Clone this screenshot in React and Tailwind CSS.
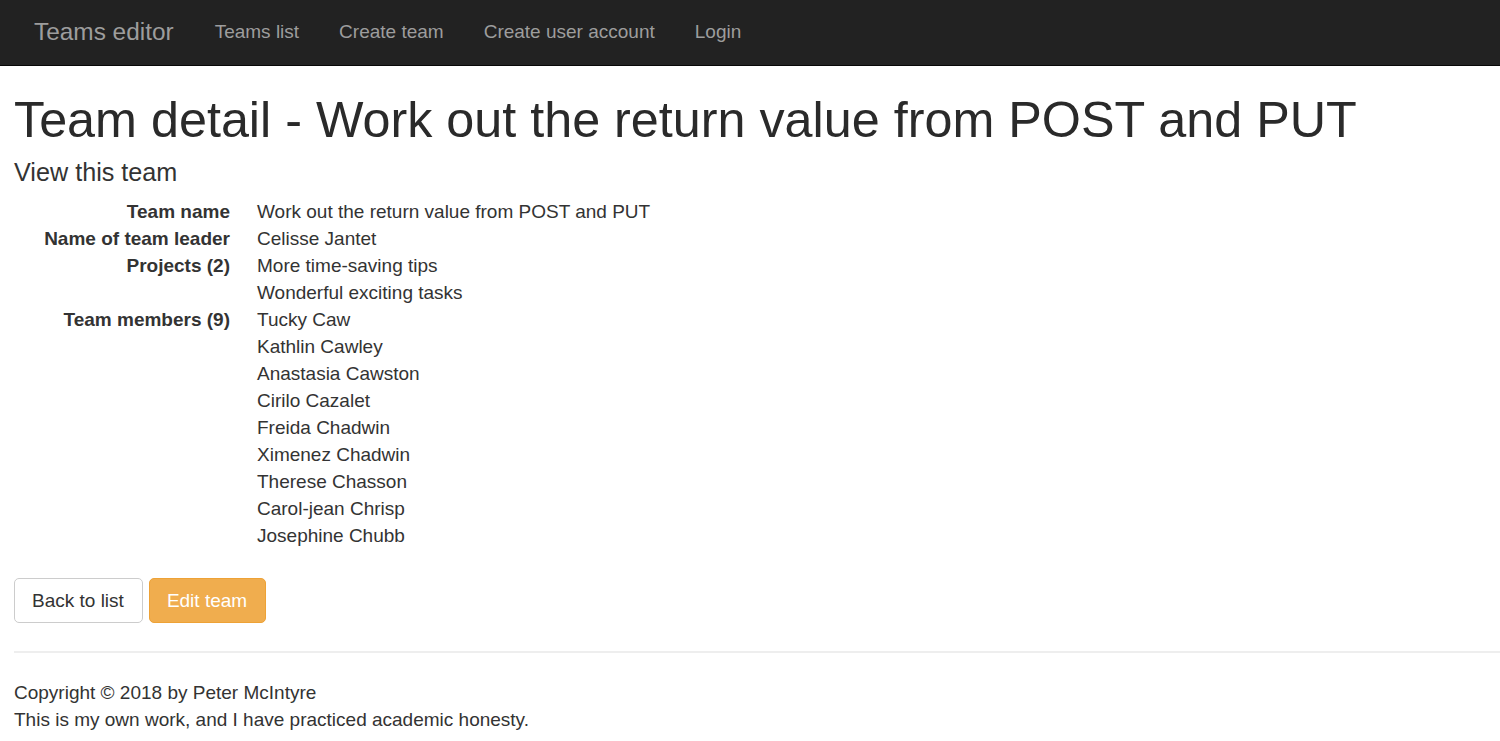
import React from "react";

const rows = [
  ["Team name", ["Work out the return value from POST and PUT"]],
  ["Name of team leader", ["Celisse Jantet"]],
  ["Projects (2)", ["More time-saving tips", "Wonderful exciting tasks"]],
  [
    "Team members (9)",
    [
      "Tucky Caw",
      "Kathlin Cawley",
      "Anastasia Cawston",
      "Cirilo Cazalet",
      "Freida Chadwin",
      "Ximenez Chadwin",
      "Therese Chasson",
      "Carol-jean Chrisp",
      "Josephine Chubb",
    ],
  ],
];

export default function App() {
  return (
    <div
      className="min-h-[741px] bg-white text-[#333] text-[19px] leading-[27px]"
      style={{ fontFamily: '"Liberation Sans", Arial, sans-serif' }}
    >
      <nav className="h-[66px] bg-[#222] border-b border-[#080808] flex items-center pl-[14px] pb-[2px]">
        <a className="pl-[20px] pr-[21px] text-[24.4px] text-[#9d9d9d]">Teams editor</a>
        <a className="px-[20px] text-[#9d9d9d]">Teams list</a>
        <a className="px-[20px] text-[#9d9d9d]">Create team</a>
        <a className="px-[20px] text-[#9d9d9d]">Create user account</a>
        <a className="px-[20px] text-[#9d9d9d]">Login</a>
      </nav>
      <div className="px-[14px]">
        <h1 className="mt-[27px] mb-[13px] text-[50.3px] leading-[53px] font-normal text-[#2a2a2a]">
          Team detail - Work out the return value from POST and PUT
        </h1>
        <h4 className="mt-[13px] mb-[13px] text-[25.2px] leading-[26px] font-normal">
          View this team
        </h4>
        <dl className="grid grid-cols-[216px_1fr] gap-x-[27px] mb-[29px]">
          {rows.map(([k, vals]) => (
            <React.Fragment key={k}>
              <dt className="font-bold text-right">{k}</dt>
              <dd className="flex flex-col">
                {vals.map((v) => (
                  <span key={v}>{v}</span>
                ))}
              </dd>
            </React.Fragment>
          ))}
        </dl>
        <div className="flex gap-[6px]">
          <button className="h-[45px] pl-[17px] pr-[18px] border border-[#ccc] rounded-[5px] bg-white text-[#333]">
            Back to list
          </button>
          <button className="h-[45px] pl-[17px] pr-[18px] border border-[#eea236] rounded-[5px] bg-[#f0ad4e] text-white">
            Edit team
          </button>
        </div>
        <hr className="mt-[28px] mb-[26px] -mr-[14px] border-t-2 border-[#eee]" />
        <footer>
          <p>Copyright © 2018 by Peter McIntyre</p>
          <p>This is my own work, and I have practiced academic honesty.</p>
        </footer>
      </div>
    </div>
  );
}
